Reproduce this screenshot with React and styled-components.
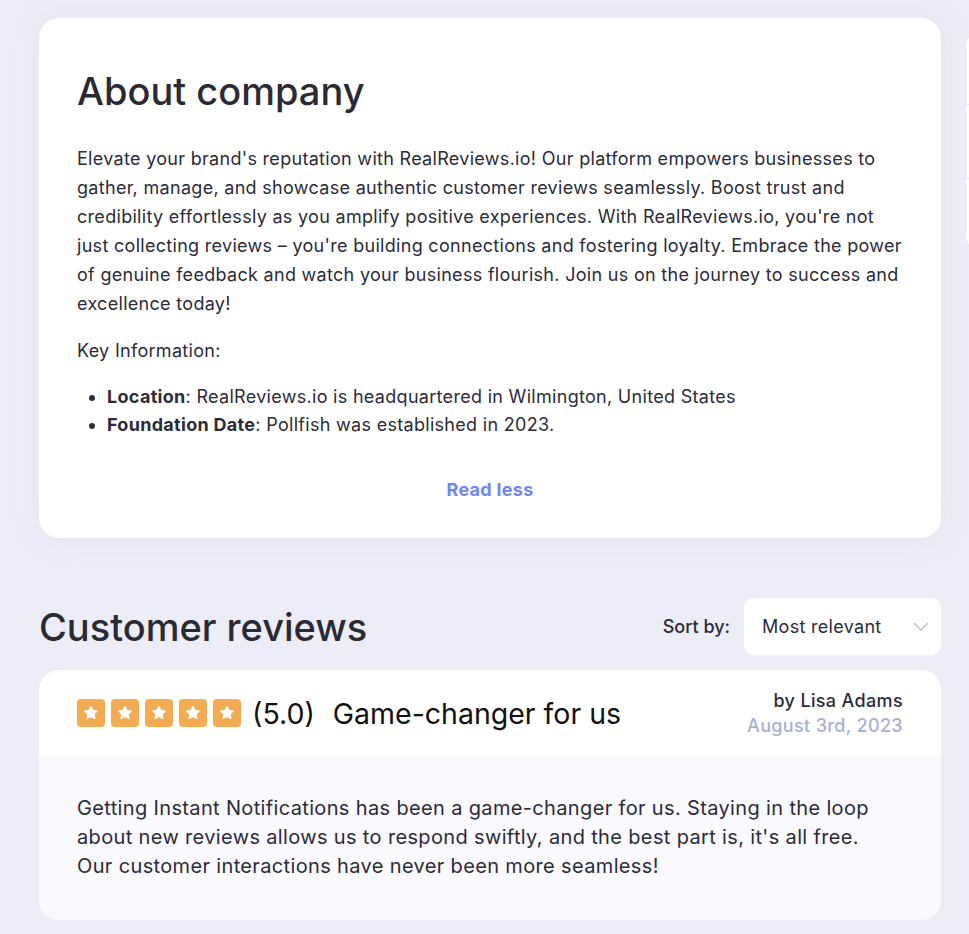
import React from "react";
import styled, { createGlobalStyle } from "styled-components";

const Global = createGlobalStyle`
  html, body { margin: 0; padding: 0; }
  body {
    background: #EDEDF7;
    font-family: Inter, "Open Sans", sans-serif;
    color: #2C2B38;
    overflow: hidden;
  }
  * { box-sizing: border-box; }
`;

const Page = styled.div`
  display: grid;
  grid-template-columns: 902px 300px;
  column-gap: 24px;
  padding: 18px 0 0 39px;
  width: 1300px;
`;

const Main = styled.main`
  display: flex;
  flex-direction: column;
`;

const Card = styled.section`
  background: #fff;
  border-radius: 20px;
  padding: 50px 38px 33px;
  box-shadow: 0 0 24px rgba(200, 200, 230, 0.25);
`;

const Title = styled.h2`
  margin: 0 0 30px;
  font-size: 38px;
  line-height: 46px;
  font-weight: 500;
  color: #2B2A33;
`;

const Para = styled.p`
  margin: 0 0 18px;
  font-size: 18px;
  line-height: 29px;
  letter-spacing: 0.3px;
  color: #2C2B38;
`;

const List = styled.ul`
  margin: 0;
  padding-left: 30px;
  letter-spacing: 0.3px;
  li { font-size: 18px; line-height: 28px; }
  b { font-weight: 700; }
`;

const ReadLess = styled.button`
  display: block;
  margin: 35px auto 0;
  background: none;
  border: 0;
  font: inherit;
  font-size: 18px;
  line-height: 29px;
  font-weight: 700;
  letter-spacing: 0.3px;
  color: #6F86F1;
  cursor: pointer;
`;

const ReviewsHead = styled.div`
  display: flex;
  align-items: center;
  justify-content: space-between;
  margin-top: 60px;
  margin-bottom: 15px;
`;

const SectionTitle = styled.h2`
  margin: 0;
  font-size: 38px;
  line-height: 46px;
  font-weight: 500;
  color: #2B2A33;
`;

const SortWrap = styled.div`
  display: flex;
  align-items: center;
  gap: 14px;
`;

const SortLabel = styled.span`
  font-size: 18px;
  font-weight: 500;
  color: #2C2B38;
`;

const Select = styled.div`
  width: 197px;
  height: 57px;
  background: #fff;
  border-radius: 10px;
  display: flex;
  align-items: center;
  justify-content: space-between;
  padding: 0 12px 0 18px;
  font-size: 18px;
  letter-spacing: 0.3px;
  color: #2C2B38;
`;

const ReviewCard = styled.article`
  background: #fff;
  border-radius: 20px;
  overflow: hidden;
`;

const ReviewTop = styled.header`
  height: 86px;
  padding: 0 38px;
  display: flex;
  align-items: center;
  justify-content: space-between;
`;

const RatingRow = styled.div`
  display: flex;
  align-items: center;
`;

const Stars = styled.div`
  display: flex;
  gap: 6px;
  margin-right: 11px;
`;

const StarBox = styled.span`
  width: 28px;
  height: 28px;
  border-radius: 4px;
  background: #F3AC52;
  display: flex;
  align-items: center;
  justify-content: center;
`;

const Score = styled.span`
  font-size: 28.5px;
  color: #111;
  margin-right: 18px;
`;

const ReviewTitle = styled.h3`
  margin: 0;
  font-size: 28.5px;
  font-weight: 400;
  color: #111;
`;

const Author = styled.div`
  text-align: right;
  display: flex;
  flex-direction: column;
  gap: 1px;
  letter-spacing: 0.35px;
`;

const By = styled.span`
  font-size: 18px;
  line-height: 24px;
  font-weight: 500;
  color: #2C2B38;
`;

const DateText = styled.span`
  font-size: 18px;
  line-height: 24px;
  font-weight: 500;
  color: #A9B0CE;
`;

const ReviewBody = styled.div`
  background: #F9F9FE;
  padding: 38px 60px 39px 38px;
  font-size: 20px;
  line-height: 29px;
  letter-spacing: 0.35px;
  color: #2C2B38;
`;

const Side = styled.aside`
  margin-top: 12px;
  background: #fff;
  border-radius: 16px;
  border: 1px solid #E6E6F0;
  height: 222px;
  display: flex;
  flex-direction: column;
`;

const SideRow = styled.div`
  height: 77px;
  border-top: 1px solid ${(p) => (p.first ? "transparent" : "#E4E4EF")};
`;

const Star = () => (
  <svg width="18" height="18" viewBox="0 0 24 24">
    <path
      d="M12 3.2l2.6 5.3 5.8.8-4.2 4.1 1 5.8L12 16.5l-5.2 2.7 1-5.8-4.2-4.1 5.8-.8z"
      fill="#fff"
      stroke="#fff"
      strokeWidth="1.6"
      strokeLinejoin="round"
    />
  </svg>
);

const Chevron = () => (
  <svg width="16" height="10" viewBox="0 0 16 10">
    <path d="M1.5 1.5L8 8l6.5-6.5" fill="none" stroke="#BCC0D3" strokeWidth="1.5" strokeLinecap="round" />
  </svg>
);

export default function App() {
  return (
    <>
      <Global />
      <Page>
        <Main>
          <Card>
            <Title>About company</Title>
            <Para>
              Elevate your brand's reputation with RealReviews.io! Our platform empowers businesses to
              gather, manage, and showcase authentic customer reviews seamlessly. Boost trust and
              credibility effortlessly as you amplify positive experiences. With RealReviews.io, you're not
              just collecting reviews – you're building connections and fostering loyalty. Embrace the power
              of genuine feedback and watch your business flourish. Join us on the journey to success and
              excellence today!
            </Para>
            <Para>Key Information:</Para>
            <List>
              <li>
                <b>Location</b>: RealReviews.io is headquartered in Wilmington, United States
              </li>
              <li>
                <b>Foundation Date</b>: Pollfish was established in 2023.
              </li>
            </List>
            <ReadLess>Read less</ReadLess>
          </Card>

          <ReviewsHead>
            <SectionTitle>Customer reviews</SectionTitle>
            <SortWrap>
              <SortLabel>Sort by:</SortLabel>
              <Select>
                <span>Most relevant</span>
                <Chevron />
              </Select>
            </SortWrap>
          </ReviewsHead>

          <ReviewCard>
            <ReviewTop>
              <RatingRow>
                <Stars>
                  {[0, 1, 2, 3, 4].map((i) => (
                    <StarBox key={i}>
                      <Star />
                    </StarBox>
                  ))}
                </Stars>
                <Score>(5.0)</Score>
                <ReviewTitle>Game-changer for us</ReviewTitle>
              </RatingRow>
              <Author>
                <By>by Lisa Adams</By>
                <DateText>August 3rd, 2023</DateText>
              </Author>
            </ReviewTop>
            <ReviewBody>
              Getting Instant Notifications has been a game-changer for us. Staying in the loop
              about new reviews allows us to respond swiftly, and the best part is, it's all free.
              Our customer interactions have never been more seamless!
            </ReviewBody>
          </ReviewCard>
        </Main>
        <Side>
          <SideRow first />
          <SideRow />
          <SideRow />
        </Side>
      </Page>
    </>
  );
}
